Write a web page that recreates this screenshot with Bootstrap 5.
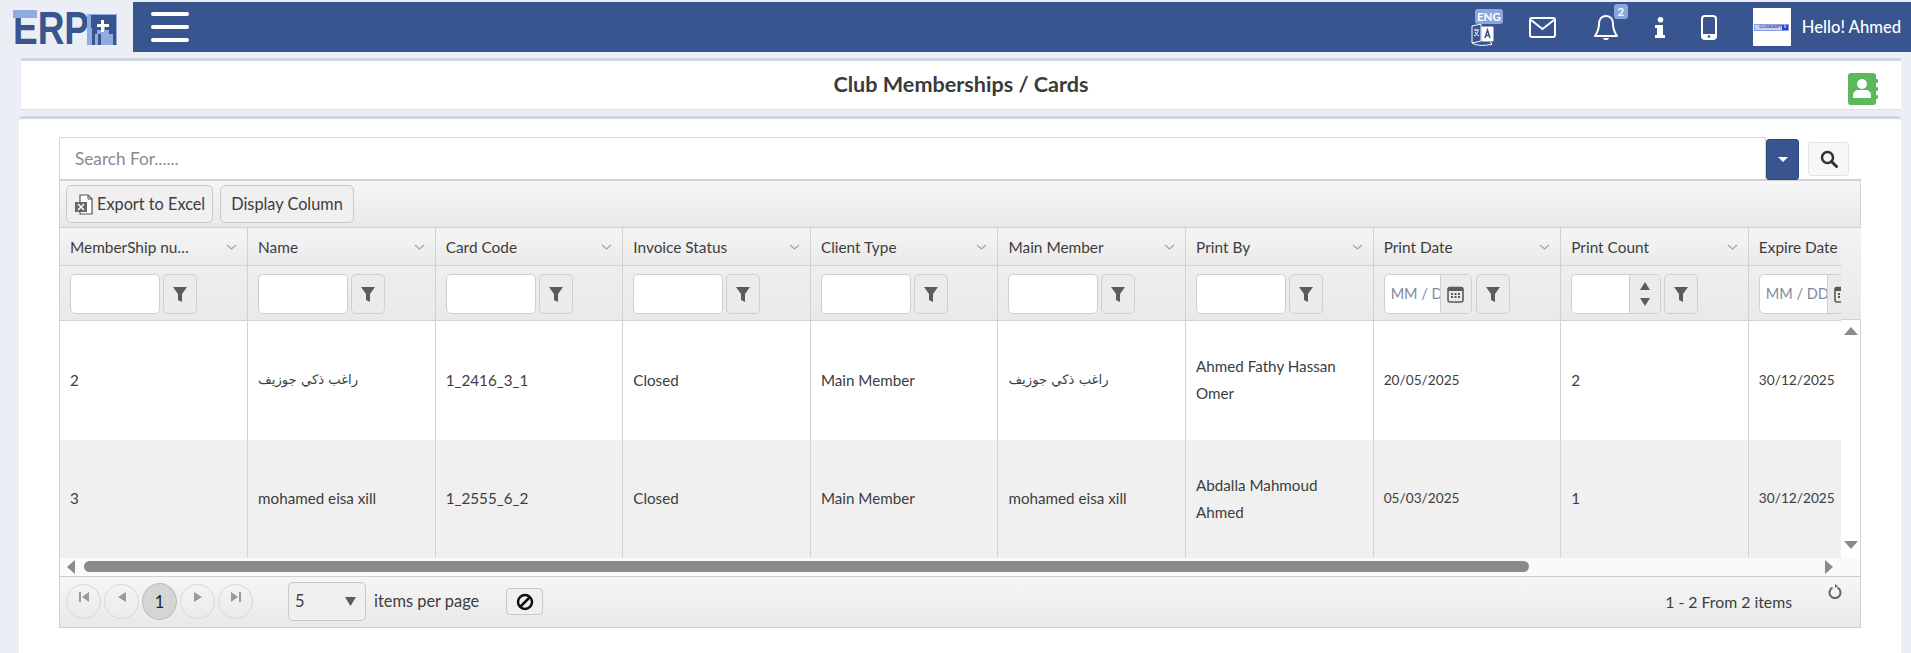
<!DOCTYPE html>
<html lang="en">
<head>
  <meta charset="UTF-8" />
  <meta name="viewport" content="width=device-width, initial-scale=1.0">
  <title>Club Memberships / Cards</title>
  <link href="https://cdn.jsdelivr.net/npm/bootstrap@5.3.3/dist/css/bootstrap.min.css" rel="stylesheet">
  <style>
    html, body { height: 100%; }
    body { background: #ebeef4; font-family: "Lato", "DejaVu Sans", sans-serif; font-size: 15.4px; color: #3d3d3d; overflow: hidden; padding-top: 2px; }
    .top-row { height: 50px; }
    .logo-box { width: 133px; padding: 0 0 0 13px; flex: none; }
    .top-bar { background: #38558f; color: #fff; padding: 0 10px 0 18px; }
    .burger span { display: block; width: 38px; height: 4px; background: #fff; border-radius: 2px; margin-bottom: 9px; }
    .burger span:last-child { margin-bottom: 0; }
    .top-icon { position: relative; display: flex; }
    .top-badge { position: absolute; background: #8ba6dc; color: #fff; font-weight: 700; font-size: 11.5px; line-height: 15px; height: 15px; border-radius: 3px; text-align: center; }
    .badge-eng { left: 4px; top: -13px; width: 28px; }
    .badge-num { left: 20px; top: -10px; width: 14px; }
    .user-pic { width: 38px; height: 38px; background: #fff; margin-right: 11px; }
    .soft-logo { width: 35px; height: 7px; background: #c9d1f5; border: 1px solid #8d9be8; color: #2a2f80; font-size: 3.6px; line-height: 5px; font-family: "Liberation Sans", sans-serif; font-weight: 700; }
    .soft-logo b { background: #2b3fc9; color: #fff; width: 8px; text-align: center; }
    .hello { font-size: 16.6px; font-weight: 500; }
    .title-bar { background: #fff; margin: 6px 10px 0 21px; height: 52px; border-top: 3px solid #d0d5de; border-bottom: 1px solid #dde0e6; position: relative; }
    .title-bar h1 { font-size: 21.6px; font-weight: 700; color: #3b3b3b; margin: 0; }
    .title-icon { position: absolute; right: 23px; top: 12px; }
    .main-panel { background: #fff; margin: 6px 10px 0 19px; border-top: 3px solid #d0d5de; border-radius: 4px 4px 0 0; padding: 18px 40px 0 40px; height: 537px; }
    .search-row { height: 42px; }
    .search-input { height: 42px; border: 1px solid #d5d8de; border-bottom-width: 0; border-radius: 0; padding-left: 15px; font-size: 17.2px; color: #777; }
    .search-input::placeholder { color: #8a8a8a; }
    .search-drop { width: 33px; height: 41px; background: #38558f; border: 1px solid #2f4677; border-radius: 3px; margin-top: 2px; }
    .search-go { width: 41px; height: 34px; background: #f7f7f7; border: 1px solid #e3e3e3; border-radius: 3px; margin: 5px 12px 0 9px; padding: 0; }
    .data-grid { border: 1px solid #d2d2d2; border-top-width: 2px; }
    .grid-bar { height: 46px; padding: 4px 6px; gap: 7px; background: linear-gradient(#f6f6f6, #e9e8e9); }
    .bar-btn { height: 38px; padding: 0 7px; background: #f1f0f0; border: 1px solid #c9c9c9; border-radius: 5px; color: #3d3d3d; font-size: 16.3px; display: flex; align-items: center; gap: 3px; }
    .bar-wide { padding: 0 10px; }
    .grid-scroll { width: 1781px; overflow: hidden; flex: none; }
    .grid-table { table-layout: fixed; width: 1876px; margin: 0; border-color: #d2d2d2; color: #3d3d3d; }
    .grid-table th, .grid-table td { border: 0 solid #d2d2d2; border-right-width: 1px; padding: 0 10px; vertical-align: middle; font-weight: 400; white-space: nowrap; overflow: hidden; }
    .grid-table th { background: linear-gradient(#f5f5f5, #ebeaeb); border-top: 1px solid #d2d2d2; border-bottom: 1px solid #d2d2d2; padding-top: 2px; }
    .head-row { height: 38px; }
    .filter-row { height: 55px; }
    .filter-row th { background: linear-gradient(#efeeef, #e9e9e9) !important; }
    .data-row td { height: 119px; background: #fff; font-size: 15.2px; }
    .data-row.alt td { height: 118px; background: #f0f0f0; }
    .data-row td.wrap-cell { white-space: normal; line-height: 27px; padding-right: 28px; }
    .data-row td.arabic { font-family: "DejaVu Sans", sans-serif; font-size: 13.2px; }
    .data-row td.date-cell { font-size: 13.7px; }
    .head-cell { display: flex; justify-content: space-between; align-items: center; }
    .filter-input { width: 90px; height: 40px; background: #fff; border: 1px solid #cfcfcf; border-radius: 5px; flex: none; overflow: hidden; }
    .filter-go { width: 34px; height: 40px; background: #ecebeb; border: 1px solid #cfcfcf; border-radius: 5px; flex: none; display: flex; align-items: center; justify-content: center; padding: 0; }
    .date-hint { color: #7d8aa0; font-size: 14.5px; flex: 1; padding-left: 6px; overflow: hidden; white-space: nowrap; line-height: 38px; }
    .side-part { width: 31px; background: #ecebeb; border-left: 1px solid #cfcfcf; flex: none; display: flex; align-items: center; justify-content: center; }
    .v-scroll { width: 20px; flex: none; }
    .v-top { height: 93px; background: linear-gradient(#f3f3f3, #e9e9e9); border-top: 1px solid #d2d2d2; border-bottom: 1px solid #d2d2d2; }
    .v-track { height: 237px; padding: 7px 0 8px; }
    .h-scroll { height: 18px; background: #fafafa; padding: 0 27px 0 7px; gap: 9px; border-top: 0; }
    .h-thumb { height: 11px; width: 1445px; background: #8a8a8a; border-radius: 6px; }
    .pager { height: 51px; padding: 0 18px 0 6px; background: linear-gradient(#f6f6f6, #e9e8e9); border-top: 1px solid #cfcfcf; font-size: 16.4px; }
    .page-dot { width: 35px; height: 35px; border: 1px solid #d7d7d7; border-radius: 50%; margin-right: 3px; display: flex; justify-content: center; padding-top: 7px; }
    .page-dot.on { background: #d5d5d5; border-color: #bdbdbd; color: #222; padding-top: 6px; height: 37px; width: 35px; }
    .size-box { width: 78px; height: 39px; border: 1px solid #c9c9c9; border-radius: 5px; margin-left: 32px; padding: 0 9px 0 6px; background: #f1f0f0; }
    .clear-btn { width: 37px; height: 27px; background: #f1f0f0; border: 1px solid #c9c9c9; border-radius: 4px; margin-left: 27px; padding: 0; display: flex; align-items: center; justify-content: center; }
    .page-info { font-size: 15.8px; margin-right: 36px; }
    .page-refresh { margin-top: 7px; }
  </style>
</head>
<body>

<div class="top-row d-flex">
  <div class="logo-box">
    <svg width="105" height="52" viewBox="0 0 105 52">
      <g transform="translate(0 6)">
        <text x="0" y="36" font-family="Liberation Sans" font-weight="700" font-size="46" textLength="76" lengthAdjust="spacingAndGlyphs" fill="#38558f">ERP</text>
        <rect x="0" y="2" width="24" height="8" fill="#8fabdf"/>
        <rect x="74" y="6" width="30" height="31" fill="#8fabdf"/>
        <path d="M78 7h25v30h-3V26h-4v-4h-4v-5h-4v5h-4v4h4v11h-3V26h-3v11h-3V20h-1z" fill="#38558f"/>
        <rect x="88" y="12" width="3" height="12" fill="#fff"/><rect x="84" y="16" width="12" height="3" fill="#fff"/>
      </g>
    </svg>
  </div>
  <nav class="top-bar flex-grow-1 d-flex align-items-center">
    <div class="burger"><span></span><span></span><span></span></div>
    <div class="ms-auto d-flex align-items-center">
      <div class="top-icon" style="margin-right:34px;margin-top:14px">
        <svg width="24" height="24" viewBox="0 0 24 24" fill="none" stroke="#fff" stroke-width="1"><path d="M1 4l9-2v17l-9 2z"/><path d="M11 5h11v14H11z" fill="#fff"/><path d="M3 8h5M5 7v2M7 9c-1 3-2 4-4 5M4 10c1 2 2 3 4 4"/><path d="M14 16l2.500-8 2.500 8M15 13.500h3" stroke="#38558f" stroke-width="1.500"/><path d="M1 21c5 3 13 3 20 1M19 20l2 2-2 1"/></svg>
        <span class="top-badge badge-eng">ENG</span>
      </div>
      <div class="top-icon" style="margin-right:38px">
        <svg width="27" height="21" viewBox="0 0 27 21" fill="none" stroke="#fff" stroke-width="2"><rect x="1" y="1" width="25" height="19" rx="2"/><path d="M2 3l11.500 9L25 3"/></svg>
      </div>
      <div class="top-icon" style="margin-right:37px">
        <svg width="24" height="27" viewBox="0 0 24 27" fill="none" stroke="#fff" stroke-width="2"><path d="M12 2c-5 0-7 4-7 8 0 6-2 9-4 12h22c-2-3-4-6-4-12 0-4-2-8-7-8z" stroke-linejoin="round"/><path d="M9 24c1 3 5 3 6 0" fill="#fff" stroke="none"/></svg>
        <span class="top-badge badge-num">2</span>
      </div>
      <div class="top-icon" style="margin-right:36px">
        <svg width="10" height="21" viewBox="0 0 10 21" fill="#fff"><circle cx="5.500" cy="2.800" r="2.800"/><path d="M0 8h8v10h2v3H0v-3h2v-7H0z"/></svg>
      </div>
      <div class="top-icon" style="margin-right:36px">
        <svg width="16" height="25" viewBox="0 0 16 25"><rect x="1" y="1" width="14" height="23" rx="3" fill="none" stroke="#fff" stroke-width="2"/><rect x="1" y="19" width="14" height="5" fill="#fff"/><circle cx="8" cy="21.500" r="1.300" fill="#38558f"/></svg>
      </div>
      <div class="user-pic d-flex align-items-center justify-content-center">
        <div class="soft-logo d-flex justify-content-between ps-1"><span>CLOUDSOFT</span><b>5</b></div>
      </div>
      <span class="hello">Hello! Ahmed</span>
    </div>
  </nav>
</div>

<div class="title-bar d-flex align-items-center justify-content-center">
  <h1>Club Memberships / Cards</h1>
  <svg class="title-icon" width="30" height="32" viewBox="0 0 30 32">
    <rect x="0" y="0" width="28" height="32" rx="3" fill="#5cb85c"/>
    <rect x="27" y="6" width="3" height="4" rx="1" fill="#5cb85c"/><rect x="27" y="14" width="3" height="4" rx="1" fill="#5cb85c"/><rect x="27" y="22" width="3" height="4" rx="1" fill="#5cb85c"/>
    <circle cx="14" cy="11" r="5" fill="#fff"/><path d="M5 25v-3c0-3 3-5 5-5h8c2 0 5 2 5 5v3z" fill="#fff"/>
  </svg>
</div>

<div class="main-panel">
  <div class="search-row d-flex align-items-start">
    <input type="text" class="form-control search-input flex-grow-1" placeholder="Search For......">
    <button class="search-drop d-flex align-items-center justify-content-center p-0 flex-shrink-0"><svg width="10" height="5" viewBox="0 0 10 5"><path d="M0 0h10L5 5z" fill="#fff"/></svg></button>
    <button class="search-go d-flex align-items-center justify-content-center flex-shrink-0"><svg width="18" height="18" viewBox="0 0 18 18" fill="none" stroke="#333" stroke-width="2.500"><circle cx="7.500" cy="7.500" r="5.500"/><path d="M11.500 11.500l5 5" stroke-linecap="round" stroke-width="3"/></svg></button>
  </div>

  <div class="data-grid">
    <div class="grid-bar d-flex">
      <button class="bar-btn">
        <svg width="20" height="21" viewBox="0 0 20 21"><path d="M6 1h8l4 4v15H6z" fill="#fff" stroke="#555" stroke-width="1.200"/><path d="M14 1v4h4" fill="none" stroke="#555"/><rect x="1" y="8" width="12" height="10" fill="#666"/><path d="M4 10l6 6M10 10l-6 6" stroke="#fff" stroke-width="1.500"/></svg>
        Export to Excel
      </button>
      <button class="bar-btn bar-wide">Display Column</button>
    </div>
    <div class="d-flex">
      <div class="grid-scroll">
        <table class="table grid-table">
          <colgroup id="cols"></colgroup>
          <thead>
            <tr class="head-row" id="head-row"></tr>
            <tr class="filter-row" id="filter-row"></tr>
          </thead>
          <tbody id="rows"></tbody>
        </table>
      </div>
      <div class="v-scroll">
        <div class="v-top"></div>
        <div class="v-track d-flex flex-column justify-content-between align-items-center">
          <svg width="14" height="8" viewBox="0 0 14 8"><path d="M0 8h14L7 0z" fill="#8a8a8a"/></svg>
          <svg width="14" height="8" viewBox="0 0 14 8"><path d="M0 0h14L7 8z" fill="#8a8a8a"/></svg>
        </div>
      </div>
    </div>
    <div class="h-scroll d-flex align-items-center">
      <svg width="8" height="14" viewBox="0 0 8 14"><path d="M8 0v14L0 7z" fill="#8a8a8a"/></svg>
      <div class="h-thumb"></div>
      <svg class="ms-auto" width="8" height="14" viewBox="0 0 8 14"><path d="M0 0v14l8-7z" fill="#8a8a8a"/></svg>
    </div>
    <div class="pager d-flex align-items-center">
      <div class="page-dot"><svg width="10" height="10" viewBox="0 0 10 10" fill="#999"><rect width="2" height="10"/><path d="M10 0v10L3 5z"/></svg></div>
      <div class="page-dot"><svg width="8" height="10" viewBox="0 0 8 10" fill="#999"><path d="M8 0v10L0 5z"/></svg></div>
      <div class="page-dot on">1</div>
      <div class="page-dot"><svg width="8" height="10" viewBox="0 0 8 10" fill="#999"><path d="M0 0v10l8-5z"/></svg></div>
      <div class="page-dot"><svg width="10" height="10" viewBox="0 0 10 10" fill="#999"><rect x="8" width="2" height="10"/><path d="M0 0v10l7-5z"/></svg></div>
      <div class="size-box d-flex align-items-center justify-content-between"><span>5</span><svg width="11" height="9" viewBox="0 0 11 9"><path d="M0 0h11L5.500 9z" fill="#5f5a55"/></svg></div>
      <span class="ms-2">items per page</span>
      <button class="clear-btn"><svg width="18" height="18" viewBox="0 0 18 18" fill="none" stroke="#111" stroke-width="2.500"><circle cx="9" cy="9" r="7"/><path d="M4 14L14 4"/></svg></button>
      <span class="ms-auto page-info">1 - 2 From 2 items</span>
      <svg class="align-self-start page-refresh" width="14" height="15" viewBox="0 0 14 15" fill="none" stroke="#666" stroke-width="2"><path d="M4.500 3.700a5.500 5.500 0 1 0 5 0"/><path d="M7 0v4l3-2z" fill="#666" stroke="none"/></svg>
    </div>
  </div>
</div>

<svg width="0" height="0" class="position-absolute">
  <symbol id="funnel" viewBox="0 0 14 15"><path d="M0 0h14L9 7v8l-4-2V7z" fill="#5f5a55"/></symbol>
  <symbol id="chev" viewBox="0 0 11 6"><path d="M1 1l4.500 4L10 1" fill="none" stroke="#a5a5a5" stroke-width="1.300"/></symbol>
</svg>

<script>
const columnas = ["MemberShip nu…", "Name", "Card Code", "Invoice Status", "Client Type", "Main Member", "Print By", "Print Date", "Print Count", "Expire Date"];
const filas = [
  ["2", "راغب ذكي جوزيف", "1_2416_3_1", "Closed", "Main Member", "راغب ذكي جوزيف", "Ahmed Fathy Hassan Omer", "20/05/2025", "2", "30/12/2025"],
  ["3", "mohamed eisa xill", "1_2555_6_2", "Closed", "Main Member", "mohamed eisa xill", "Abdalla Mahmoud Ahmed", "05/03/2025", "1", "30/12/2025"]
];

const filtro = '<button class="filter-go"><svg width="14" height="15"><use href="#funnel"/></svg></button>';
const calendario = '<div class="side-part"><svg width="17" height="18" viewBox="0 0 17 18"><rect x="1" y="2.500" width="15" height="14.500" rx="2" fill="none" stroke="#5f5a55" stroke-width="1.600"/><rect x="1" y="2.500" width="15" height="3.500" fill="#5f5a55"/><path d="M4 8h2v2H4zM7.500 8h2v2h-2zM11 8h2v2h-2zM4 11h2v2H4zM7.500 11h2v2h-2zM11 11h2v2h-2z" fill="#5f5a55"/></svg></div>';

// Celda de filtro según el tipo de columna
function celdaFiltro(col) {
  if (col === "Print Date") {
    return `<div class="d-flex gap-1"><div class="filter-input d-flex date-print"><span class="date-hint">MM / DD / YYYY</span>${calendario}</div>${filtro}</div>`;
  }
  if (col === "Expire Date") {
    return `<div class="d-flex gap-1"><div class="filter-input d-flex date-expire"><span class="date-hint">MM / DD / YYYY</span>${calendario}</div>${filtro}</div>`;
  }
  if (col === "Print Count") {
    return `<div class="d-flex" style="gap:3px"><div class="filter-input d-flex"><span class="flex-grow-1"></span><div class="side-part flex-column gap-2"><svg width="10" height="8"><path d="M0 8h10L5 0z" fill="#5f5a55"/></svg><svg width="10" height="8"><path d="M0 0h10L5 8z" fill="#5f5a55"/></svg></div></div>${filtro}</div>`;
  }
  return `<div class="d-flex" style="gap:3px"><div class="filter-input"></div>${filtro}</div>`;
}

document.getElementById("cols").innerHTML = columnas.map(() => '<col style="width:187.6px">').join("");
document.getElementById("head-row").innerHTML = columnas.map(c =>
  `<th><div class="head-cell"><span>${c}</span>${c === "Expire Date" ? "" : '<svg width="11" height="6"><use href="#chev"/></svg>'}</div></th>`).join("");
document.getElementById("filter-row").innerHTML = columnas.map(c => `<th>${celdaFiltro(c)}</th>`).join("");
document.querySelector(".date-print").style.width = "88px";
document.querySelector(".date-expire").style.width = "100px";
document.getElementById("rows").innerHTML = filas.map((fila, i) =>
  `<tr class="data-row ${i % 2 ? "alt" : ""}">` + fila.map(v => {
    let clase = "";
    if (/[\u0600-\u06FF]/.test(v)) clase = "arabic";
    else if (/^\d+\/\d+\/\d+$/.test(v)) clase = "date-cell";
    else if (v.length > 18 && v.includes(" ")) clase = "wrap-cell";
    return `<td class="${clase}">${v}</td>`;
  }).join("") + "</tr>").join("");
</script>

<script src="https://cdn.jsdelivr.net/npm/bootstrap@5.3.3/dist/js/bootstrap.bundle.min.js"></script>
</body>
</html>
